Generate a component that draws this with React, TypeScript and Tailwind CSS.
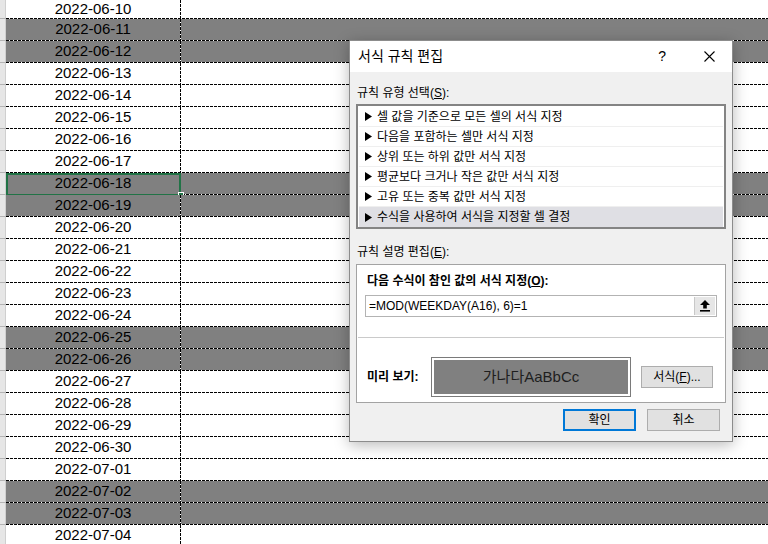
import React from 'react';

const font = "font-['Liberation_Sans','Noto_Sans_CJK_KR',sans-serif]";

const buildRows = () => {
  const rows: { label: string; weekend: boolean }[] = [];
  const start = Date.UTC(2022, 5, 10);
  for (let i = 0; i < 25; i++) {
    const d = new Date(start + i * 86400000);
    const label = d.toISOString().slice(0, 10);
    const day = d.getUTCDay();
    rows.push({ label, weekend: day === 0 || day === 6 });
  }
  return rows;
};

const ruleTypes = [
  '셀 값을 기준으로 모든 셀의 서식 지정',
  '다음을 포함하는 셀만 서식 지정',
  '상위 또는 하위 값만 서식 지정',
  '평균보다 크거나 작은 값만 서식 지정',
  '고유 또는 중복 값만 서식 지정',
  '수식을 사용하여 서식을 지정할 셀 결정',
];

const SheetRow: React.FC<{ label: string; weekend: boolean; selected: boolean; first: boolean }> = ({
  label,
  weekend,
  selected,
  first,
}) => {
  const fill = weekend ? 'bg-[#808080]' : 'bg-white';
  return (
    <div className={`flex ${first ? 'h-[19px]' : 'h-[22px]'}`}>
      <div className="w-[6px] shrink-0 border-b border-r border-b-[#b4b4b4] border-r-[#cfcfcf] bg-[#e6e6e6]" />
      <div className="relative flex flex-1 flex-col">
        <div className={`flex ${first ? 'h-[18px]' : 'h-[21px]'}`}>
          <div className={`flex w-[174px] items-center justify-center text-[15px] text-black ${fill}`}>{label}</div>
          <div className="w-px bg-[repeating-linear-gradient(180deg,#000_0_3px,transparent_3px_4px)]" />
          <div className={`flex-1 ${fill}`} />
        </div>
        <div className="h-px bg-[repeating-linear-gradient(90deg,#000_0_3px,transparent_3px_4px)]" />
        {selected && (
          <>
            <div className="absolute left-0 top-0 h-[23px] w-[175px] border-2 border-[#217346]" />
            <div className="absolute left-[172px] top-[19px] h-[6px] w-[6px] border border-white bg-[#217346]" />
          </>
        )}
      </div>
    </div>
  );
};

const Triangle = () => (
  <svg width="7" height="9" viewBox="0 0 7 9" className="mr-[5px] shrink-0">
    <polygon points="0,0 7,4.5 0,9" fill="#000" />
  </svg>
);

const Dialog = () => (
  <div className="absolute left-[349px] top-[40px] flex h-[402px] w-[384px] flex-col border border-[#8c8c8c] bg-[#f0f0f0] shadow-[0_3px_14px_rgba(0,0,0,0.28)]">
    {/* title bar */}
    <div className="flex h-[31px] shrink-0 items-center bg-white pl-[8px] text-[14px] text-black">
      <span className="flex-1">서식 규칙 편집</span>
      <span className="mr-[38px] text-[14px]">?</span>
      <svg width="11" height="11" viewBox="0 0 11 11" className="mr-[17px]">
        <path d="M0.5 0.5 L10.5 10.5 M10.5 0.5 L0.5 10.5" stroke="#000" strokeWidth="1.1" />
      </svg>
    </div>

    <div className="flex flex-1 flex-col px-[6px] text-[12px] text-black">
      <div className="h-[32px] pl-[1px] pt-[13px] leading-[17px]">
        규칙 유형 선택(<span className="underline">S</span>):
      </div>
      <div className="h-[125px] border-2 border-[#848484] bg-white px-[1px] pt-[1px]">
        {ruleTypes.map((t, i) => (
          <div
            key={t}
            className={`flex h-[20px] items-center pl-[6px] leading-none ${
              i === ruleTypes.length - 1 ? 'bg-[#dfdfe4]' : 'border-b border-[#efefef]'
            }`}
          >
            <Triangle />
            <span>{t}</span>
          </div>
        ))}
      </div>

      <div className="h-[35px] pl-[1px] pt-[15px] leading-[17px]">
        규칙 설명 편집(<span className="underline">E</span>):
      </div>
      <div className="flex h-[139px] flex-col border border-[#a3a3a3] bg-white">
        <div className="px-[8px] pt-[8px]">
          <div className="pl-[2px] font-bold leading-[17px]">
            다음 수식이 참인 값의 서식 지정(<span className="underline">O</span>):
          </div>
          <div className="mt-[5px] flex h-[22px] border border-[#b3b3b3] bg-white">
            <div className="flex flex-1 items-center pl-[3px] text-[12px]">=MOD(WEEKDAY(A16), 6)=1</div>
            <div className="m-[1px] flex w-[21px] items-center justify-center border-l border-[#c8c8c8] bg-[#e6e6e6]">
              <svg width="10" height="12" viewBox="0 0 10 12">
                <polygon points="5,0 10,5 6.8,5 6.8,8.5 3.2,8.5 3.2,5 0,5" fill="#000" />
                <rect x="0" y="10" width="10" height="1.6" fill="#000" />
              </svg>
            </div>
          </div>
        </div>
        <div className="mx-[1px] mt-[20px] h-px bg-[#cacaca]" />
        <div className="mt-[19px] flex items-center pl-[10px]">
          <span className="w-[64px] font-bold">미리 보기:</span>
          <div className="h-[40px] w-[200px] border border-[#7a7a7a] p-[2px]">
            <div className="flex h-full items-center justify-center bg-[#808080] text-[15px] text-[#1e1e1e]">
              가나다AaBbCc
            </div>
          </div>
          <button className="ml-[10px] h-[22px] w-[72px] border border-[#adadad] bg-[#e1e1e1] text-[12px]">
            서식(<span className="underline">F</span>)...
          </button>
        </div>
      </div>

      <div className="mt-[6px] flex justify-end gap-[11px] pr-[6px]">
        <button className="h-[22px] w-[73px] border-2 border-[#0078d7] bg-[#e1e1e1] text-[12px]">확인</button>
        <button className="h-[22px] w-[73px] border border-[#adadad] bg-[#e1e1e1] text-[12px]">취소</button>
      </div>
    </div>
  </div>
);

export default function App() {
  const rows = buildRows();
  return (
    <div className={`relative h-[544px] w-[768px] overflow-hidden bg-white ${font}`}>
      {rows.map((r, i) => (
        <SheetRow
          key={r.label}
          label={r.label}
          weekend={r.weekend}
          selected={r.label === '2022-06-18'}
          first={i === 0}
        />
      ))}
      <Dialog />
    </div>
  );
}
